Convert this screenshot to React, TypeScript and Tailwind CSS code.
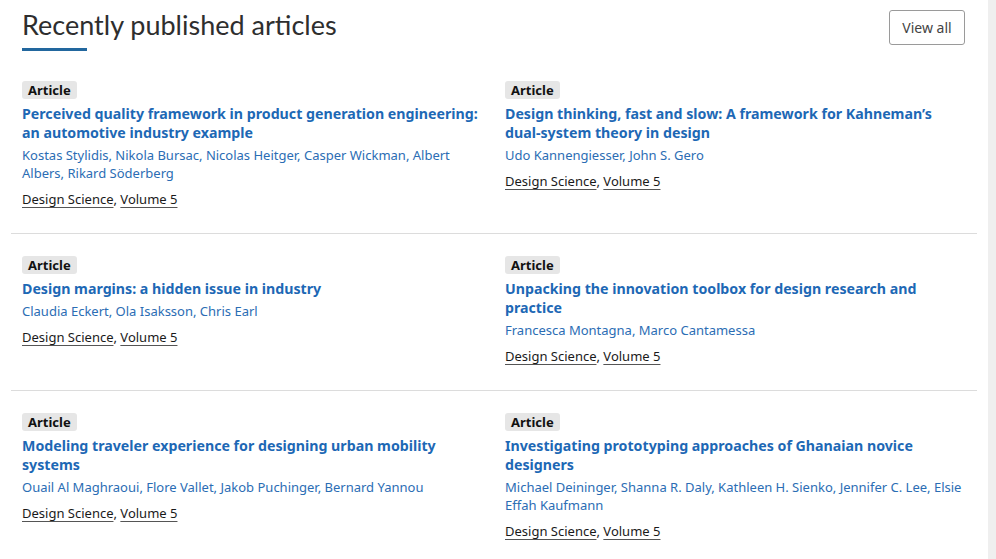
const articles = [
  {
    title: "Perceived quality framework in product generation engineering: an automotive industry example",
    authors: "Kostas Stylidis, Nikola Bursac, Nicolas Heitger, Casper Wickman, Albert Albers, Rikard Söderberg",
  },
  {
    title: "Design thinking, fast and slow: A framework for Kahneman’s dual-system theory in design",
    authors: "Udo Kannengiesser, John S. Gero",
  },
  {
    title: "Design margins: a hidden issue in industry",
    authors: "Claudia Eckert, Ola Isaksson, Chris Earl",
  },
  {
    title: "Unpacking the innovation toolbox for design research and practice",
    authors: "Francesca Montagna, Marco Cantamessa",
  },
  {
    title: "Modeling traveler experience for designing urban mobility systems",
    authors: "Ouail Al Maghraoui, Flore Vallet, Jakob Puchinger, Bernard Yannou",
  },
  {
    title: "Investigating prototyping approaches of Ghanaian novice designers",
    authors: "Michael Deininger, Shanna R. Daly, Kathleen H. Sienko, Jennifer C. Lee, Elsie Effah Kaufmann",
  },
];

type Article = { title: string; authors: string };

const ArticleCard = ({ article }: { article: Article }) => (
  <div className="px-[11px]">
    <span className="inline-block rounded-[3px] bg-[#e6e6e6] px-[6px] text-[13px] leading-[18px] font-bold text-[#111]">
      Article
    </span>
    <h3 className="mt-[3px] text-[14.2px] leading-[19px] font-bold text-[#1d68b5]">
      {article.title}
    </h3>
    <p className="mt-[4px] text-[13px] leading-[18px] text-[#2b6db4]">
      {article.authors}
    </p>
    <p className="mt-[8px] text-[13px] leading-[18px] text-[#1a1a1a]">
      <span className="underline decoration-[#555] underline-offset-[3px]">Design Science</span>,{" "}
      <span className="underline decoration-[#555] underline-offset-[3px]">Volume 5</span>
    </p>
  </div>
);

const App = () => {
  const rows = [articles.slice(0, 2), articles.slice(2, 4), articles.slice(4, 6)];
  return (
    <div className="flex h-[559px] w-[996px] overflow-hidden bg-white font-['Noto_Sans',sans-serif]">
      <div className="flex-1 px-[11px]">
        <div className="flex items-start justify-between pr-[12px] pl-[11px] pt-[9px]">
          <div>
            <h2 className="font-['Lato',sans-serif] text-[27px] leading-[32px] text-[#2e2e2e]">
              Recently published articles
            </h2>
            <div className="mt-[7px] h-[3px] w-[65px] bg-[#22679e]" />
          </div>
          <button className="mt-[1px] h-[35px] w-[76px] rounded-[3px] border border-[#9a9a9a] text-[14px] text-[#444]">
            View all
          </button>
        </div>
        <div className="mt-[26px]">
          {rows.map((row, i) => (
            <div
              key={i}
              className={`grid grid-cols-2 pb-[25px] ${i === 0 ? "pt-0" : "pt-[18px]"} ${
                i < rows.length - 1 ? "border-b border-[#dcdcdc]" : ""
              }`}
            >
              {row.map((a) => (
                <ArticleCard key={a.title} article={a} />
              ))}
            </div>
          ))}
        </div>
      </div>
      <div className="w-[8px] bg-[#efefef]" />
    </div>
  );
};

export default App;
